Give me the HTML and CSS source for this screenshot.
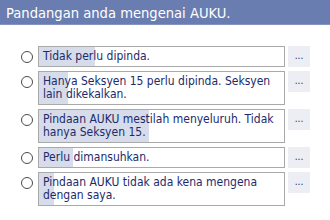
FILE: index.html
```html
<!DOCTYPE html>
<html>
<head>
<meta charset="utf-8">
<link rel="stylesheet" href="styles.css">
</head>
<body>
<div class="poll">
  <div class="title">Pandangan anda mengenai AUKU.</div>
  <ul class="options">
    <li class="option">
      <span class="radio"></span>
      <div class="answer" style="--pct:23%">Tidak perlu dipinda.</div>
      <span class="more">...</span>
    </li>
    <li class="option">
      <span class="radio"></span>
      <div class="answer" style="--pct:12%">Hanya Seksyen 15 perlu dipinda. Seksyen lain dikekalkan.</div>
      <span class="more">...</span>
    </li>
    <li class="option">
      <span class="radio"></span>
      <div class="answer" style="--pct:45%">Pindaan AUKU mestilah menyeluruh. Tidak hanya Seksyen 15.</div>
      <span class="more">...</span>
    </li>
    <li class="option">
      <span class="radio"></span>
      <div class="answer" style="--pct:14%">Perlu dimansuhkan.</div>
      <span class="more">...</span>
    </li>
    <li class="option">
      <span class="radio"></span>
      <div class="answer" style="--pct:6%">Pindaan AUKU tidak ada kena mengena dengan saya.</div>
      <span class="more">...</span>
    </li>
  </ul>
</div>
</body>
</html>
```
FILE: styles.css
```css
html, body {
  margin: 0;
  padding: 0;
  background: #ffffff;
}
.poll {
  width: 330px;
  font-family: "DejaVu Sans Condensed", "DejaVu Sans", sans-serif;
}
.title {
  height: 25px;
  line-height: 25px;
  padding-left: 6px;
  background: #6a7db0;
  border-bottom: 1px solid #8594c0;
  color: #ffffff;
  font-size: 14.6px;
  box-sizing: border-box;
}
.options {
  list-style: none;
  margin: 0;
  padding: 21px 0 0 21px;
  display: flex;
  flex-direction: column;
  gap: 4px;
}
.option {
  display: flex;
  align-items: flex-start;
}
.radio {
  width: 10px;
  height: 10px;
  border: 1px solid #4a4a4a;
  border-radius: 50%;
  margin-top: 5px;
  margin-right: 5px;
  flex: none;
}
.answer {
  width: 247px;
  box-sizing: border-box;
  border: 1px solid #a9a9a9;
  padding: 3px 4px 3px 4px;
  font-size: 12px;
  line-height: 13px;
  color: #1c2b6b;
  background: linear-gradient(to right, #d6dcea var(--pct), #ffffff var(--pct));
}
.more {
  width: 22px;
  height: 21px;
  margin-left: 3px;
  background: #eceef4;
  color: #1c2b6b;
  font-size: 10px;
  line-height: 20px;
  text-align: center;
  flex: none;
}
```
